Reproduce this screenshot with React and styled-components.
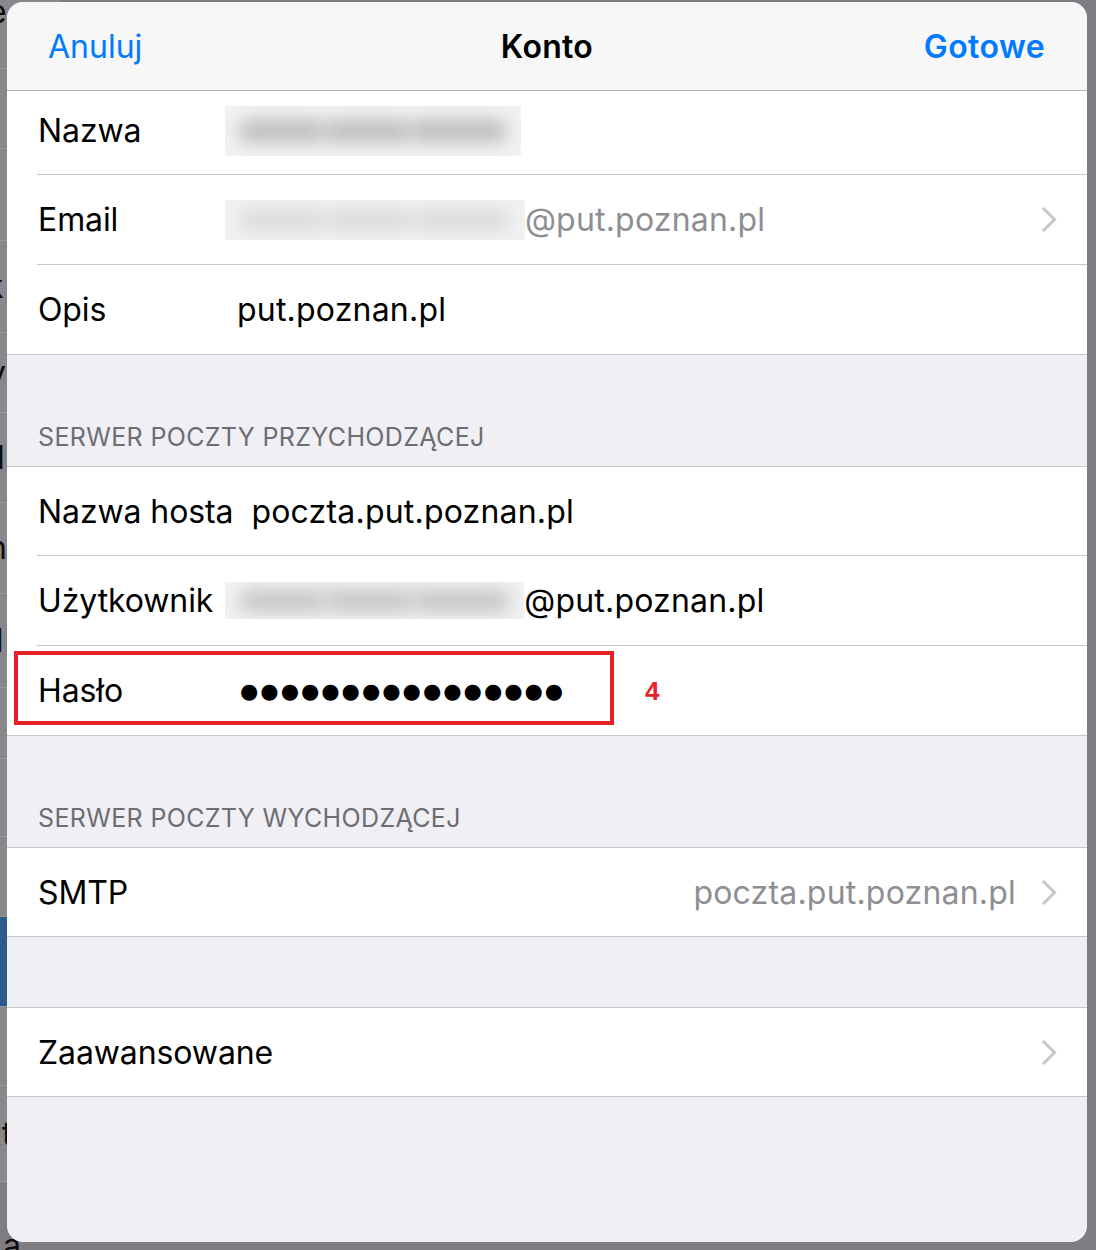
import React from 'react'
import styled, { createGlobalStyle } from 'styled-components'

const GlobalStyle = createGlobalStyle`
  html, body {
    margin: 0;
    padding: 0;
    background: #818186;
  }
  body {
    font-family: Inter, "Noto Sans", sans-serif;
    -webkit-font-smoothing: antialiased;
  }
`

const Page = styled.div`
  position: relative;
  width: 1096px;
  height: 1250px;
  overflow: hidden;
  background: #7d7d82;
`

/* list of the screen underneath the sheet, only its edge peeks out */
const Backdrop = styled.div`
  display: flex;
  flex-direction: column;
  width: 60px;
`

const BgRow = styled.div`
  height: ${p => p.h}px;
  flex: none;
  box-sizing: border-box;
  border-bottom: ${p => (p.last ? 'none' : '1px solid #9a9a9e')};
  background: ${p => (p.blue ? '#2c5a8b' : p.last ? 'transparent' : '#88888c')};
  display: flex;
  align-items: ${p => (p.top ? 'flex-start' : 'center')};
  overflow: hidden;
  font-size: 32px;
  line-height: 1;
  color: #0d0d0d;
  white-space: nowrap;

  span {
    margin-left: ${p => p.shift || -10}px;
    margin-top: ${p => (p.top ? -4 : 0)}px;
  }
`

const Sheet = styled.div`
  position: absolute;
  left: 7px;
  top: 2px;
  width: 1080px;
  height: 1240px;
  border-radius: 16px;
  overflow: hidden;
  background: #efeff4;
  display: flex;
  flex-direction: column;
`

const NavBar = styled.header`
  height: 89px;
  flex: none;
  box-sizing: border-box;
  background: #f7f7f8;
  border-bottom: 1px solid #b3b3b6;
  display: flex;
  align-items: center;
  justify-content: space-between;
  padding: 0 42px 0 41px;
  position: relative;
`

const NavButton = styled.span`
  color: #007aff;
  font-size: 32px;
  font-weight: ${p => (p.bold ? 600 : 400)};
  letter-spacing: ${p => (p.bold ? '0.4px' : '0')};
`

const NavTitle = styled.span`
  position: absolute;
  left: 0;
  right: 0;
  text-align: center;
  font-size: 32px;
  font-weight: 600;
  color: #000;
  letter-spacing: 0.3px;
  pointer-events: none;
`

const Group = styled.div`
  background: #fff;
  border-top: ${p => (p.noTop ? 'none' : '1px solid #c8c7cc')};
  border-bottom: 1px solid #c8c7cc;
  display: flex;
  flex-direction: column;
`

const Row = styled.div`
  position: relative;
  height: ${p => p.h || 89}px;
  flex: none;
  display: flex;
  align-items: center;
  padding: 0 30px ${p => p.lift || 0}px 31px;
  box-sizing: content-box;
  font-size: 32px;
  letter-spacing: -0.1px;
  color: #000;

  & + & {
    border-top: 1px solid #c8c7cc;
    margin-left: 30px;
    padding-left: 1px;
  }
`

const Label = styled.span`
  flex: none;
  width: ${p => (p.w ? p.w + 'px' : 'auto')};
  white-space: nowrap;
`

const Value = styled.span`
  flex: 1;
  display: flex;
  align-items: center;
  white-space: nowrap;
  letter-spacing: 0.2px;
  color: ${p => (p.muted ? '#8e8e93' : '#000')};
  justify-content: ${p => (p.right ? 'flex-end' : 'flex-start')};
  margin-left: ${p => p.ml || 0}px;
`

const Hidden = styled.span`
  display: inline-block;
  position: relative;
  width: ${p => p.w}px;
  height: ${p => p.h}px;
  background: #f2f2f2;
  overflow: hidden;

  &::before {
    content: '';
    position: absolute;
    left: 14px;
    right: 14px;
    top: 50%;
    height: 22px;
    margin-top: -11px;
    background: linear-gradient(
      90deg,
      ${p => p.tone} 0 30%,
      ${p => p.gap} 30% 34%,
      ${p => p.tone} 34% 62%,
      ${p => p.gap} 62% 66%,
      ${p => p.tone} 66% 100%
    );
    border-radius: 10px;
    filter: blur(9px);
  }
`

const Dots = styled.span`
  font-family: "DejaVu Sans", sans-serif;
  font-size: 21px;
  letter-spacing: 2px;
  margin-left: 3px;
`

const Chevron = () => (
  <svg width="16" height="27" viewBox="0 0 16 27" fill="none">
    <path d="M2 2l11.5 11.5L2 25" stroke="#c7c7cc" strokeWidth="3" />
  </svg>
)

const ChevronSlot = styled.span`
  display: flex;
  margin-left: ${p => p.ml || 0}px;
`

const SectionHead = styled.div`
  height: ${p => p.h}px;
  flex: none;
  box-sizing: border-box;
  display: flex;
  align-items: flex-end;
  padding: 0 0 14px 31px;
  font-size: 25px;
  color: #6d6d72;
  letter-spacing: 0.35px;
`

const Mark = styled.div`
  position: absolute;
  left: -23px;
  top: 5px;
  width: 600px;
  height: 74px;
  box-sizing: border-box;
  border: 4px solid #e8202a;
`

const MarkNumber = styled.span`
  position: absolute;
  left: 608px;
  top: 50%;
  transform: translateY(-50%);
  font-family: "Liberation Sans", Arial, sans-serif;
  font-weight: 700;
  font-size: 26px;
  letter-spacing: 0;
  color: #e8202a;
`

const bgRows = [
  { h: 69, t: 'e', shift: -12, top: true },
  { h: 80 },
  { h: 92 },
  { h: 92, t: 'k', shift: -14 },
  { h: 80, t: 'y', shift: -12 },
  { h: 90, t: 'l', shift: -3 },
  { h: 91, t: 'n', shift: -12 },
  { h: 94, t: 'zl', shift: -22 },
  { h: 71 },
  { h: 78 },
  { h: 80 },
  { h: 90, blue: true },
  { h: 79 },
  { h: 96, t: 'xt', shift: -16 },
  { h: 128, t: 'á. _', shift: 3, last: true },
]

export default function App() {
  return (
    <Page>
      <GlobalStyle />
      <Backdrop>
        {bgRows.map((r, i) => (
          <BgRow key={i} h={r.h} blue={r.blue} shift={r.shift} top={r.top} last={r.last}>
            {r.t && <span>{r.t}</span>}
          </BgRow>
        ))}
      </Backdrop>

      <Sheet>
        <NavBar>
          <NavButton>Anuluj</NavButton>
          <NavTitle>Konto</NavTitle>
          <NavButton bold>Gotowe</NavButton>
        </NavBar>

        <Group noTop>
          <Row h={79} lift={4}>
            <Label w={187}>Nazwa</Label>
            <Value>
              <Hidden w={296} h={50} tone="#bababa" gap="#cfcfcf" />
            </Value>
          </Row>
          <Row>
            <Label w={187}>Email</Label>
            <Value muted>
              <Hidden w={300} h={40} tone="#dadada" gap="#e6e6e6" />
              @put.poznan.pl
            </Value>
            <ChevronSlot>
              <Chevron />
            </ChevronSlot>
          </Row>
          <Row>
            <Label w={199}>Opis</Label>
            <Value>put.poznan.pl</Value>
          </Row>
        </Group>

        <SectionHead h={111}>SERWER POCZTY PRZYCHODZĄCEJ</SectionHead>
        <Group>
          <Row h={88}>
            <Label>Nazwa hosta</Label>
            <Value ml={18}>poczta.put.poznan.pl</Value>
          </Row>
          <Row>
            <Label>Użytkownik</Label>
            <Value ml={12}>
              <Hidden w={299} h={37} tone="#c4c4c4" gap="#d6d6d6" />
              @put.poznan.pl
            </Value>
          </Row>
          <Row>
            <Mark />
            <Label w={199}>Hasło</Label>
            <Value>
              <Dots>●●●●●●●●●●●●●●●●</Dots>
            </Value>
            <MarkNumber>4</MarkNumber>
          </Row>
        </Group>

        <SectionHead h={111}>SERWER POCZTY WYCHODZĄCEJ</SectionHead>
        <Group>
          <Row h={88}>
            <Label>SMTP</Label>
            <Value muted right>poczta.put.poznan.pl</Value>
            <ChevronSlot ml={25}>
              <Chevron />
            </ChevronSlot>
          </Row>
        </Group>

        <SectionHead h={70} />
        <Group>
          <Row h={88}>
            <Label>Zaawansowane</Label>
            <Value />
            <ChevronSlot>
              <Chevron />
            </ChevronSlot>
          </Row>
        </Group>
      </Sheet>
    </Page>
  )
}
